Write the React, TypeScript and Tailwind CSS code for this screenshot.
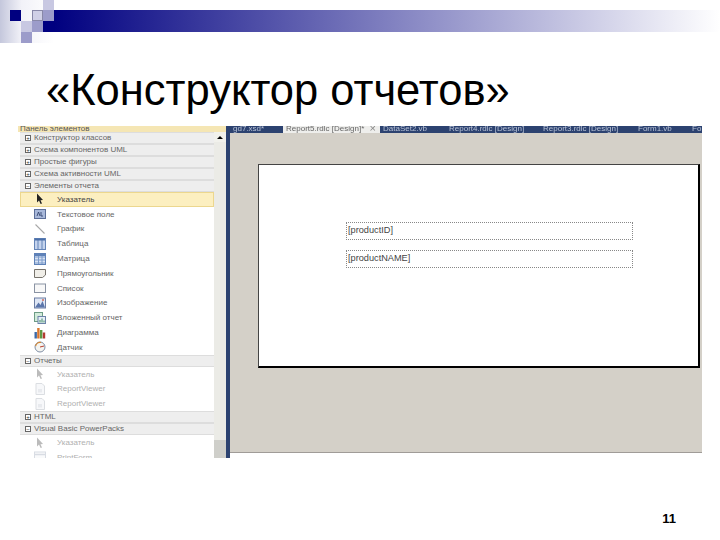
const sections1 = ['Конструктор классов', 'Схема компонентов UML', 'Простые фигуры', 'Схема активности UML']

const reportItems = [
  { icon: 'pointer', label: 'Указатель', selected: true },
  { icon: 'textbox', label: 'Текстовое поле' },
  { icon: 'line', label: 'График' },
  { icon: 'table', label: 'Таблица' },
  { icon: 'matrix', label: 'Матрица' },
  { icon: 'rect', label: 'Прямоугольник' },
  { icon: 'list', label: 'Список' },
  { icon: 'image', label: 'Изображение' },
  { icon: 'subreport', label: 'Вложенный отчет' },
  { icon: 'chart', label: 'Диаграмма' },
  { icon: 'gauge', label: 'Датчик' },
]

const tabs = [
  { label: 'gd7.xsd*', width: 'w-[53px]' },
  { label: 'Report5.rdlc [Design]*', width: 'w-[97px]', active: true },
  { label: 'DataSet2.vb', width: 'w-[66px]' },
  { label: 'Report4.rdlc [Design]', width: 'w-[94px]' },
  { label: 'Report3.rdlc [Design]', width: 'w-[95px]' },
  { label: 'Form1.vb', width: 'w-[54px]' },
  { label: 'Fo', width: 'w-[13px]' },
]

function ToolIcon({ name, faded }: { name: string; faded?: boolean }) {
  const cls = `w-[12px] h-[12px] ${faded ? 'opacity-30' : ''}`
  switch (name) {
    case 'pointer':
      return (
        <svg viewBox="0 0 12 12" className={cls}>
          <path d="M3 0.5 L3 9.5 L5 7.6 L6.6 11 L8 10.4 L6.5 7.2 L9 7 Z" fill="#222" />
        </svg>
      )
    case 'textbox':
      return (
        <svg viewBox="0 0 12 12" className={cls}>
          <rect x="0.5" y="1.5" width="11" height="9" fill="#a9b9da" stroke="#5d6f98" />
          <path d="M3 8 L4.5 4 L6 8 M7 4 V8 H9" fill="none" stroke="#34456f" strokeWidth="0.9" />
        </svg>
      )
    case 'line':
      return (
        <svg viewBox="0 0 12 12" className={cls}>
          <path d="M1.5 1.5 L10.5 10.5" stroke="#a8a8a8" strokeWidth="1.1" />
        </svg>
      )
    case 'table':
      return (
        <svg viewBox="0 0 12 12" className={cls}>
          <rect x="0.5" y="0.5" width="11" height="11" fill="#c5d4ee" stroke="#6585b8" />
          <path d="M4 1 V11 M8 1 V11" stroke="#6585b8" />
          <path d="M1 1.5 H11" stroke="#4a6ea8" strokeWidth="2" />
        </svg>
      )
    case 'matrix':
      return (
        <svg viewBox="0 0 12 12" className={cls}>
          <rect x="0.5" y="0.5" width="11" height="11" fill="#d8e2f3" stroke="#5f82b8" />
          <path d="M1 4 H11 M1 7 H11 M1 10 H11 M4.5 1 V11 M8 1 V11" stroke="#7d9ccb" />
          <rect x="1" y="1" width="10" height="2" fill="#5f82b8" />
        </svg>
      )
    case 'rect':
      return (
        <svg viewBox="0 0 12 12" className={cls}>
          <path d="M0.5 2.5 H11.5 V8 L8.5 10.5 H0.5 Z" fill="#f0eee8" stroke="#77736c" />
        </svg>
      )
    case 'list':
      return (
        <svg viewBox="0 0 12 12" className={cls}>
          <rect x="0.5" y="2" width="11" height="8.5" fill="#f8f8f8" stroke="#8a93a3" />
        </svg>
      )
    case 'image':
      return (
        <svg viewBox="0 0 12 12" className={cls}>
          <rect x="0.5" y="1" width="11" height="10" fill="#dfe7f5" stroke="#6d7ea3" />
          <path d="M1 10.5 L4.5 5.5 L6.5 8 L8.5 4 L11 10.5 Z" fill="#5b76ab" />
          <circle cx="9" cy="3" r="1" fill="#d06a5a" />
        </svg>
      )
    case 'subreport':
      return (
        <svg viewBox="0 0 12 12" className={cls}>
          <rect x="0.5" y="0.5" width="8" height="9" fill="#d4ecdc" stroke="#6e9c86" />
          <rect x="4" y="4.5" width="7.5" height="7" fill="#e6eef8" stroke="#6d84a8" />
          <path d="M6 10.5 V8 M8 10.5 V6.5 M10 10.5 V8.5" stroke="#3f8a5e" />
        </svg>
      )
    case 'chart':
      return (
        <svg viewBox="0 0 12 12" className={cls}>
          <rect x="0.5" y="5" width="2.4" height="6.5" fill="#3c6aa8" />
          <rect x="3.2" y="1" width="2.4" height="10.5" fill="#d9762c" />
          <rect x="6" y="3" width="2.4" height="8.5" fill="#5f9a44" />
          <rect x="8.8" y="5.5" width="2.4" height="6" fill="#b23a30" />
        </svg>
      )
    case 'gauge':
      return (
        <svg viewBox="0 0 12 12" className={cls}>
          <circle cx="6" cy="6" r="5" fill="#f4f4f0" stroke="#7f8ea5" />
          <path d="M1.6 5 A4.6 4.6 0 0 1 7 1.5" fill="none" stroke="#d8862e" strokeWidth="1.2" />
          <path d="M6 6 L10 5" stroke="#b9402f" />
        </svg>
      )
    case 'viewer':
      return (
        <svg viewBox="0 0 12 12" className={cls}>
          <path d="M2 0.5 H8 L10.5 3 V11.5 H2 Z" fill="#e8ebf0" stroke="#8a93a3" />
          <rect x="4" y="6" width="4" height="3.5" fill="#b4bcca" />
        </svg>
      )
    default:
      return (
        <svg viewBox="0 0 12 12" className={cls}>
          <rect x="0.5" y="1" width="11" height="10" fill="#eef0f5" stroke="#7f8ea5" />
          <path d="M1 3.5 H11" stroke="#7f8ea5" strokeWidth="1.5" />
        </svg>
      )
  }
}

function SectionRow({ label, open }: { label: string; open?: boolean }) {
  return (
    <div className="h-[12px] flex items-center bg-[#eeeeee] border-y border-[#dddddd] pl-[5px] gap-[3px]">
      <span className="w-[6px] h-[6px] flex items-center justify-center border border-[#666666] bg-white text-[6px] leading-none text-[#333333] shrink-0">
        {open ? '−' : '+'}
      </span>
      <span className="text-[8px] leading-none text-[#666666] whitespace-nowrap">{label}</span>
    </div>
  )
}

function ItemRow({ icon, label, selected, faded }: { icon: string; label: string; selected?: boolean; faded?: boolean }) {
  return (
    <div className={`h-[14.8px] flex items-center pl-[13px] gap-[11px] border ${selected ? 'bg-[#fcefc0] border-[#ecd78e]' : 'border-transparent'}`}>
      <ToolIcon name={icon} faded={faded} />
      <span className={`pt-[1px] text-[8px] leading-none whitespace-nowrap ${selected ? 'text-[#444444]' : faded ? 'text-[#b0b0b0]' : 'text-[#666666]'}`}>{label}</span>
    </div>
  )
}

function Toolbox() {
  return (
    <div className="w-[208px] flex flex-col shrink-0 overflow-hidden">
      <div className="h-[6px] bg-[#f5e6b4] text-[8px] leading-[5px] text-[#555555] pl-[2px] overflow-hidden whitespace-nowrap">
        Панель элементов
      </div>
      <div className="flex flex-1 min-h-0">
        <div className="w-[196px] overflow-hidden bg-white pl-[2px]">
          {sections1.map(s => <SectionRow key={s} label={s} />)}
          <SectionRow label="Элементы отчета" open />
          {reportItems.map(it => <ItemRow key={it.label} {...it} />)}
          <SectionRow label="Отчеты" open />
          <ItemRow icon="pointer" label="Указатель" faded />
          <ItemRow icon="viewer" label="ReportViewer" faded />
          <ItemRow icon="viewer" label="ReportViewer" faded />
          <SectionRow label="HTML" />
          <SectionRow label="Visual Basic PowerPacks" open />
          <ItemRow icon="pointer" label="Указатель" faded />
          <ItemRow icon="form" label="PrintForm" faded />
        </div>
        <div className="w-[12px] bg-[#ebebe6] flex flex-col justify-between">
          <div className="h-[10px] flex items-center justify-center bg-[#f1f1ec]">
            <span className="border-x-[3px] border-b-[3px] border-x-transparent border-b-black" />
          </div>
          <div className="h-[18px] bg-[#cfcfca]" />
        </div>
      </div>
    </div>
  )
}

function Designer() {
  return (
    <div className="flex-1 min-w-0 flex flex-col">
      <div className="h-[7px] flex bg-[#2c4270] overflow-hidden">
        {tabs.map(t => (
          <div
            key={t.label}
            className={`${t.width} shrink-0 pl-[3px] flex justify-between pr-[4px] text-[8px] leading-[5px] whitespace-nowrap overflow-hidden ${t.active ? 'bg-[#eeeeec] text-[#666666]' : 'text-[#b8c2d6]'}`}
          >
            <span>{t.label}</span>
            {t.active && <span className="text-[11px] text-[#888888]">×</span>}
          </div>
        ))}
      </div>
      <div className="h-[320px] bg-[#d4d0c8] border-b border-[#a09c98] pt-[31px] pl-[28px]">
        <div className="w-[442px] h-[204px] bg-white border-t border-l border-[#444444] border-r-2 border-b-2 border-r-black border-b-black pt-[57px] pl-[87px]">
          <div className="w-[287px] h-[18px] border border-dotted border-[#888888] flex items-center text-[9.2px] leading-none text-[#444444] pl-[1px]">
            [productID]
          </div>
          <div className="w-[287px] h-[18px] mt-[10px] border border-dotted border-[#888888] flex items-center text-[9.2px] leading-none text-[#444444] pl-[1px]">
            [productNAME]
          </div>
        </div>
      </div>
    </div>
  )
}

export default function App() {
  return (
    <div className="w-[720px] h-[540px] bg-white overflow-hidden flex flex-col font-['Liberation_Sans',Arial,sans-serif]">
      <div className="h-[43px] flex shrink-0">
        <div className="w-[54px] h-[43px] grid grid-cols-[10px_11px_11px_11px_11px] grid-rows-[10px_11px_11px_11px] bg-linear-to-r/srgb from-[#c4c7dc] via-[#f2f2f8] via-40% to-white">
          <div /><div /><div /><div /><div className="bg-[#c8c8e2]" />
          <div /><div className="bg-[#000080]" /><div /><div className="bg-[#d0d0e6] border border-[#8888a8]" /><div className="bg-[#9c9cca]" />
          <div /><div /><div className="bg-[#c8c8e2]" /><div className="bg-[#9c9cca]" /><div className="bg-[#000080]" />
          <div /><div /><div className="bg-[#9c9cca]" /><div /><div />
        </div>
        <div className="flex-1 mt-[10px] h-[22px] bg-linear-to-r/srgb from-[#000080] to-white" />
      </div>
      <h1 className="h-[83px] pl-[46px] pt-[22px] text-[43.5px] leading-[50px] font-normal text-black shrink-0 whitespace-nowrap">«Конструктор отчетов»</h1>
      <div className="ml-[18px] w-[684px] h-[332px] flex overflow-hidden shrink-0 blur-[0.35px]">
        <Toolbox />
        <div className="w-[4px] bg-[#2c4270] shrink-0" />
        <Designer />
      </div>
      <div className="flex justify-end pr-[44px] pt-[53px] text-[13px] leading-[15px] font-bold text-black">11</div>
    </div>
  )
}
